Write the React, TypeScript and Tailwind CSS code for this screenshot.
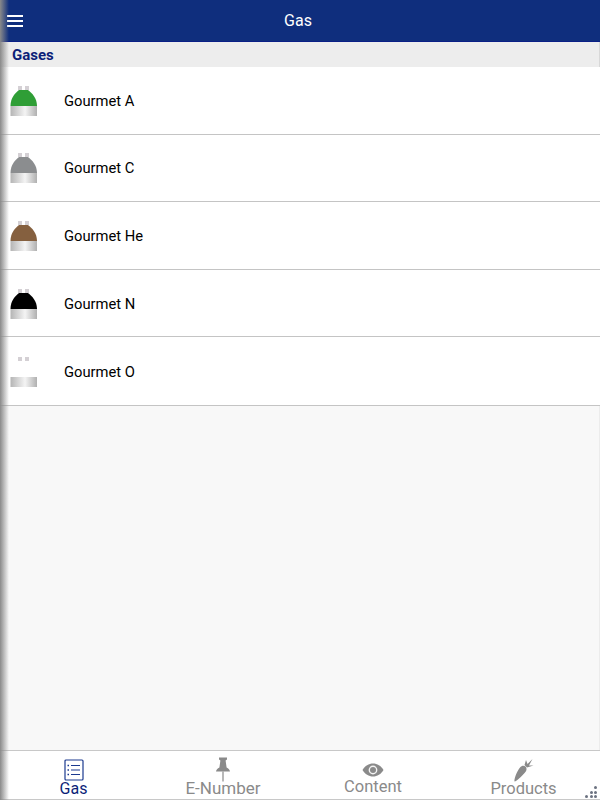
const gases = [
  { name: 'Gourmet A', color: '#2f9e36' },
  { name: 'Gourmet C', color: '#8b8d8f' },
  { name: 'Gourmet He', color: '#85603f' },
  { name: 'Gourmet N', color: '#000000' },
  { name: 'Gourmet O', color: '#ffffff' },
];

function Cylinder({ color, id }: { color: string; id: string }) {
  return (
    <svg width="28" height="30" viewBox="0 0 28 30" className="shrink-0 mt-[1px]">
      <defs>
        <linearGradient id={id} x1="0" x2="1" y1="0" y2="0">
          <stop offset="0" stopColor="#b5b5b5" />
          <stop offset="0.55" stopColor="#f4f4f4" />
          <stop offset="1" stopColor="#b0b0b0" />
        </linearGradient>
      </defs>
      <rect x="8" y="0" width="4" height="4" fill="#d4d0d4" />
      <rect x="15" y="0" width="4" height="4" fill="#d4d0d4" />
      <path d="M0.5 20 C0.5 12 5 7 9 4 H18 C22 7 27 12 27 20 Z" fill={color} />
      <rect x="0.5" y="20" width="26.5" height="10" fill={`url(#${id})`} />
    </svg>
  );
}

function ListIcon() {
  return (
    <svg width="20" height="22" viewBox="0 0 20 22" fill="none" stroke="#1c3a8f" strokeWidth="1.2">
      <rect x="1" y="1" width="18" height="20" rx="1" />
      <path d="M7 6.5H16M7 11H16M7 15.5H16" />
      <path d="M3.5 6.5H5M3.5 11H5M3.5 15.5H5" strokeWidth="1.6" />
    </svg>
  );
}

function PinIcon() {
  return (
    <svg width="16" height="25" viewBox="0 0 16 25" fill="#8a8a8a">
      <path d="M4 0.5H12V2.5L10.6 3.5L11.6 10.5C13.4 11.5 15 13 15 14.5H1C1 13 2.6 11.5 4.4 10.5L5.4 3.5L4 2.5Z" />
      <rect x="7.4" y="14.5" width="1.2" height="10" />
    </svg>
  );
}

function EyeIcon() {
  return (
    <svg width="22" height="14" viewBox="0 0 22 14">
      <path d="M0.5 7C3 2.8 6.8 0.5 11 0.5C15.2 0.5 19 2.8 21.5 7C19 11.2 15.2 13.5 11 13.5C6.8 13.5 3 11.2 0.5 7Z" fill="#8a8a8a" />
      <circle cx="11" cy="7" r="4.4" fill="#f4f4f4" />
      <circle cx="11" cy="7" r="3" fill="#8a8a8a" />
    </svg>
  );
}

function CarrotIcon() {
  return (
    <svg width="20" height="24" viewBox="0 0 20 24" fill="#8a8a8a">
      <path d="M0.5 23.5C0 21 2.5 14 6 9.5C7.5 7.5 10 7 11.5 8.5C13 10 13 12.5 11 14.5C7.5 18 3 23.5 0.5 23.5Z" />
      <path d="M10.5 7L12 2L13.5 6L18.5 1L15 7.5L19.5 7.5L13 9.5Z" />
    </svg>
  );
}

export default function App() {
  return (
    <div className="relative w-[600px] h-[800px] flex flex-col overflow-hidden bg-[#f8f8f8] font-['Roboto',sans-serif]">
      {/* Header */}
      <header className="h-[42px] shrink-0 flex items-center justify-center relative bg-[#0f2e7d] border-b border-[#0a1f86]">
        <div className="absolute left-[7px] top-[15px] flex flex-col gap-[3px]">
          <span className="block w-4 h-[2px] bg-white" />
          <span className="block w-4 h-[2px] bg-white" />
          <span className="block w-4 h-[2px] bg-white" />
        </div>
        <span className="text-white text-[16px] leading-none -ml-[4px]">Gas</span>
      </header>

      {/* Section */}
      <div className="h-[25px] shrink-0 flex items-center pl-3 bg-[#ededed] border-r border-[#d8d8d8]">
        <span className="text-[15px] font-bold text-[#0c1f78] mt-[1px]">Gases</span>
      </div>

      {/* Gas list */}
      <div className="flex flex-col shrink-0 bg-white border-b border-[#c4c4c4]">
        {gases.map((g, i) => (
          <div
            key={g.name}
            className={`h-[67.6px] flex items-center pl-[10px] ${i < gases.length - 1 ? 'border-b border-[#c4c4c4]' : ''}`}
          >
            <Cylinder color={g.color} id={`silver-${i}`} />
            <span className="ml-[26px] text-[14.75px] text-black mt-[1px]">{g.name}</span>
          </div>
        ))}
      </div>

      <div className="flex-1 border-r border-[#ececec]" />

      {/* Tab bar */}
      <nav className="h-[50px] shrink-0 grid grid-cols-4 bg-white border-t border-b border-[#c8c8c8]">
        <div className="flex flex-col items-center pt-[8px] -ml-[3px]">
          <ListIcon />
          <span className="text-[16px] leading-[16px] text-[#0c1f78]">Gas</span>
        </div>
        <div className="flex flex-col items-center pt-[6px] -ml-[4px]">
          <PinIcon />
          <span className="-mt-[2px] text-[17px] leading-[16px] text-[#8a8a8a]">E-Number</span>
        </div>
        <div className="flex flex-col items-center pt-[12px] -ml-[4px]">
          <EyeIcon />
          <span className="mt-[2px] text-[16.5px] leading-[16px] text-[#8a8a8a]">Content</span>
        </div>
        <div className="flex flex-col items-center pt-[7px] -ml-[3px]">
          <CarrotIcon />
          <span className="-mt-[1px] text-[16.5px] leading-[16px] text-[#8a8a8a]">Products</span>
        </div>
      </nav>

      {/* Resize grip */}
      <div className="absolute right-[3px] bottom-[2px] grid grid-cols-3 gap-[1.5px]">
        {[0, 0, 1, 0, 1, 1, 1, 1, 1].map((on, i) => (
          <span key={i} className={`block w-[3px] h-[3px] rounded-full ${on ? 'bg-[#6b7280]' : 'bg-transparent'}`} />
        ))}
      </div>

      {/* Left edge shadow */}
      <div className="absolute left-0 top-0 bottom-0 w-[9px] bg-gradient-to-r from-[#8a8a8a] to-transparent pointer-events-none" />
    </div>
  );
}
